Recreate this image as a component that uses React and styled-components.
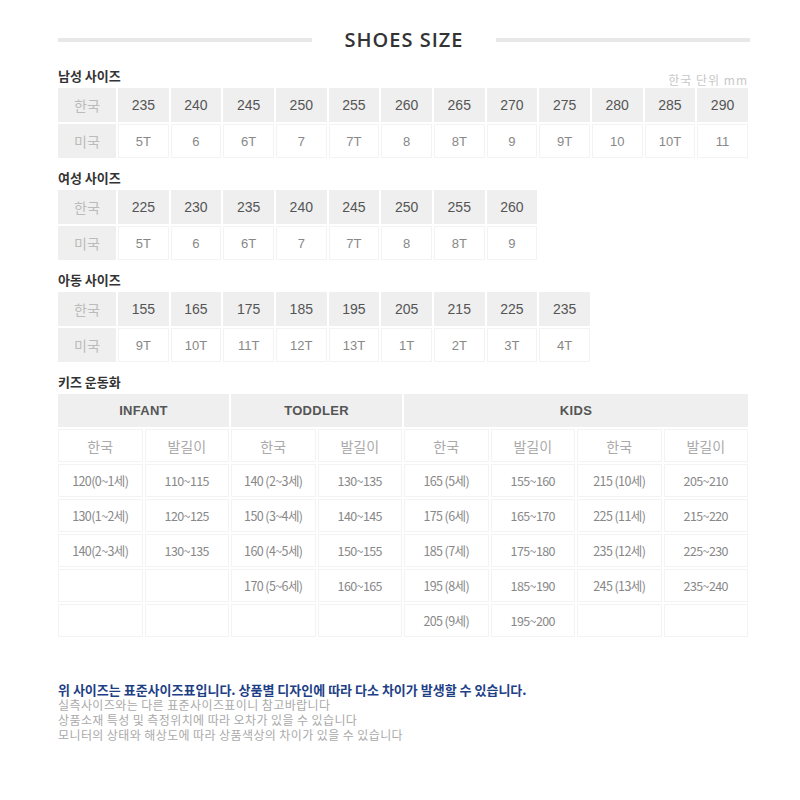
import styled, { createGlobalStyle } from 'styled-components';

const GlobalStyle = createGlobalStyle`
  body {
    margin: 0;
    background: #fff;
    font-family: 'Noto Sans CJK KR', 'Liberation Sans', sans-serif;
  }
`;

const Page = styled.div`
  width: 690px;
  padding: 29px 0 40px 58px;
`;

const TitleBar = styled.div`
  display: flex;
  align-items: center;
  height: 22px;
  margin: 0 -2px 16px 0;
`;

const Line = styled.div`
  flex: 1;
  height: 4px;
  background: #e8e8e8;
`;

const Title = styled.h1`
  margin: 0 33px;
  font-family: 'Open Sans', 'Liberation Sans', sans-serif;
  font-size: 20px;
  font-weight: 600;
  letter-spacing: 1px;
  color: #333;
  line-height: 22px;
`;

const Section = styled.div`
  margin-bottom: 9px;
`;

const SectionHead = styled.div`
  display: flex;
  justify-content: space-between;
  align-items: flex-end;
  height: 18px;
  margin-bottom: 1px;
`;

const Label = styled.h2`
  margin: 0;
  font-size: 13px;
  font-weight: 700;
  color: #333;
  line-height: 18px;
`;

const Unit = styled.span`
  font-size: 12px;
  color: #c8c8c8;
  letter-spacing: 1px;
  line-height: 14px;
  margin-bottom: -2px;
`;

const Table = styled.table`
  border-collapse: separate;
  border-spacing: 2px;
  margin: 0 -2px;
  table-layout: ${(p) => (p.$fixed ? 'fixed' : 'auto')};
  width: ${(p) => (p.$fixed ? 'calc(100% + 4px)' : 'auto')};
`;

const Cell = styled.td`
  box-sizing: border-box;
  height: ${(p) => (p.$tall ? '33px' : '34px')};
  width: ${(p) => (p.$head ? '58px' : p.$tall ? 'auto' : '50.67px')};
  padding: 0;
  text-align: center;
  vertical-align: middle;
  background: ${(p) => (p.$gray ? '#efefef' : '#fff')};
  border: 1px solid ${(p) => (p.$gray ? '#efefef' : '#f3f3f3')};
  color: ${(p) => p.$color || '#777'};
  font-family: ${(p) =>
    p.$kr ? "'Noto Sans CJK KR', sans-serif" : "'Liberation Sans', 'Noto Sans CJK KR', sans-serif"};
  font-size: ${(p) => p.$size || '13px'};
  font-weight: ${(p) => p.$weight || 400};
  letter-spacing: ${(p) => p.$spacing || '0'};
  white-space: nowrap;
`;

const Notes = styled.div`
  margin-top: 43px;
`;

const NoteMain = styled.p`
  margin: 0;
  height: 15px;
  line-height: 15px;
  font-size: 13px;
  font-weight: 700;
  color: #1e3f86;
`;

const NoteSub = styled.p`
  margin: 0;
  height: 15px;
  line-height: 15px;
  font-size: 12px;
  letter-spacing: 0.4px;
  color: #aaa;
`;

const sizes = [
  {
    label: '남성 사이즈',
    unit: true,
    kr: ['235', '240', '245', '250', '255', '260', '265', '270', '275', '280', '285', '290'],
    us: ['5T', '6', '6T', '7', '7T', '8', '8T', '9', '9T', '10', '10T', '11'],
  },
  {
    label: '여성 사이즈',
    kr: ['225', '230', '235', '240', '245', '250', '255', '260'],
    us: ['5T', '6', '6T', '7', '7T', '8', '8T', '9'],
  },
  {
    label: '아동 사이즈',
    kr: ['155', '165', '175', '185', '195', '205', '215', '225', '235'],
    us: ['9T', '10T', '11T', '12T', '13T', '1T', '2T', '3T', '4T'],
  },
];

const kidsRows = [
  ['120(0~1세)', '110~115', '140 (2~3세)', '130~135', '165 (5세)', '155~160', '215 (10세)', '205~210'],
  ['130(1~2세)', '120~125', '150 (3~4세)', '140~145', '175 (6세)', '165~170', '225 (11세)', '215~220'],
  ['140(2~3세)', '130~135', '160 (4~5세)', '150~155', '185 (7세)', '175~180', '235 (12세)', '225~230'],
  ['', '', '170 (5~6세)', '160~165', '195 (8세)', '185~190', '245 (13세)', '235~240'],
  ['', '', '', '', '205 (9세)', '195~200', '', ''],
];

const SizeTable = ({ data }) => (
  <Section>
    <SectionHead>
      <Label>{data.label}</Label>
      {data.unit && <Unit>한국 단위 mm</Unit>}
    </SectionHead>
    <Table>
      <tbody>
        <tr>
          <Cell $head $gray $kr $color="#bbb" $size="14px">한국</Cell>
          {data.kr.map((v, i) => (
            <Cell key={i} $gray $color="#555" $size="14px">{v}</Cell>
          ))}
        </tr>
        <tr>
          <Cell $head $gray $kr $color="#bbb" $size="14px">미국</Cell>
          {data.us.map((v, i) => (
            <Cell key={i} $color="#888" $size="13px">{v}</Cell>
          ))}
        </tr>
      </tbody>
    </Table>
  </Section>
);

export default function App() {
  return (
    <>
      <GlobalStyle />
      <Page>
        <TitleBar>
          <Line />
          <Title>SHOES SIZE</Title>
          <Line />
        </TitleBar>

        {sizes.map((s) => (
          <SizeTable key={s.label} data={s} />
        ))}

        <Section>
          <SectionHead>
            <Label>키즈 운동화</Label>
          </SectionHead>
          <Table $fixed>
            <tbody>
              <tr>
                {['INFANT', 'TODDLER', 'KIDS'].map((g, i) => (
                  <Cell key={g} $tall $gray colSpan={i === 2 ? 4 : 2} $color="#555" $size="13px" $weight={700} $spacing="0.3px">
                    {g}
                  </Cell>
                ))}
              </tr>
              <tr>
                {Array.from({ length: 8 }).map((_, i) => (
                  <Cell key={i} $tall $kr $color="#aaa" $size="14px">
                    {i % 2 === 0 ? '한국' : '발길이'}
                  </Cell>
                ))}
              </tr>
              {kidsRows.map((row, r) => (
                <tr key={r}>
                  {row.map((v, i) => (
                    <Cell key={i} $tall $kr $color="#888" $size="12.5px" $spacing="-0.6px">
                      {v}
                    </Cell>
                  ))}
                </tr>
              ))}
            </tbody>
          </Table>
        </Section>

        <Notes>
          <NoteMain>위 사이즈는 표준사이즈표입니다. 상품별 디자인에 따라 다소 차이가 발생할 수 있습니다.</NoteMain>
          <NoteSub>실측사이즈와는 다른 표준사이즈표이니 참고바랍니다</NoteSub>
          <NoteSub>상품소재 특성 및 측정위치에 따라 오차가 있을 수 있습니다</NoteSub>
          <NoteSub>모니터의 상태와 해상도에 따라 상품색상의 차이가 있을 수 있습니다</NoteSub>
        </Notes>
      </Page>
    </>
  );
}
